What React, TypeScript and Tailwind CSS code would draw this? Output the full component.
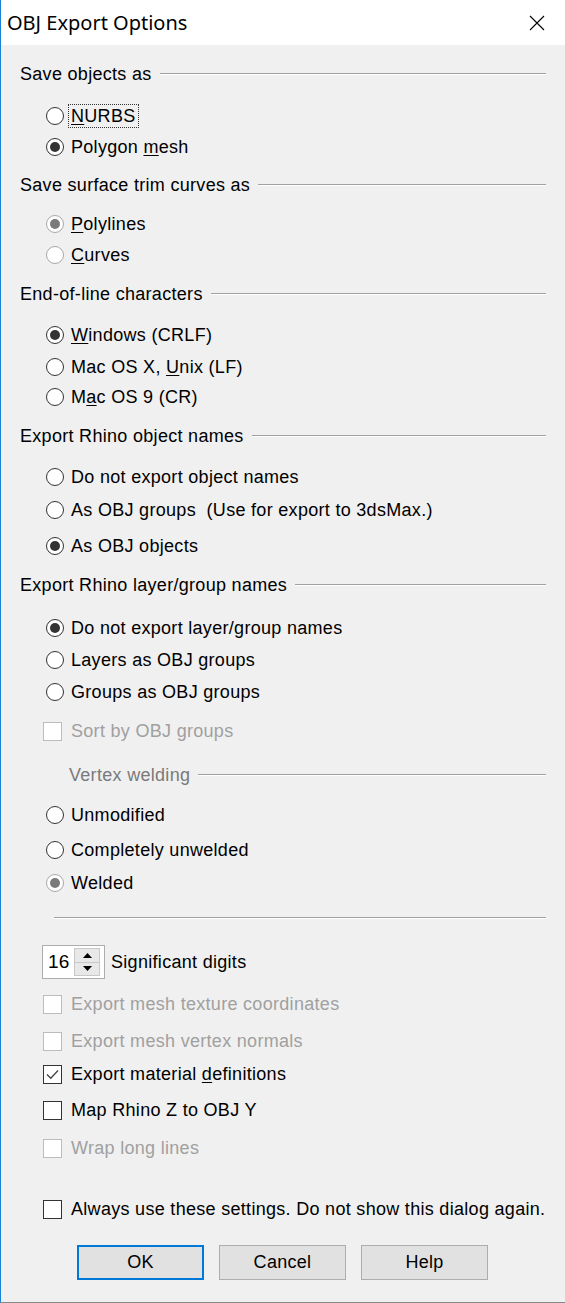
import React from 'react'

const font = { fontFamily: '"Liberation Sans", Arial, sans-serif' }

function Radio({ label, checked, disabled, className }: { label: React.ReactNode; checked?: boolean; disabled?: boolean; className: string }) {
  return (
    <div className={`flex h-[30px] items-center ${className}`}>
      <div
        className={`ml-[26px] flex h-[18px] w-[18px] shrink-0 items-center justify-center rounded-full border bg-white ${
          disabled ? 'border-[#a8a8a8]' : 'border-[#333333]'
        }`}
      >
        {checked && <div className={`h-[10px] w-[10px] rounded-full ${disabled ? 'bg-[#7a7a7a]' : 'bg-[#333333]'}`} />}
      </div>
      <span className="ml-[7px] whitespace-pre">{label}</span>
    </div>
  )
}

function Check({ label, checked, disabled, className }: { label: React.ReactNode; checked?: boolean; disabled?: boolean; className: string }) {
  return (
    <div className={`flex h-[30px] items-center ${className}`}>
      <div
        className={`ml-[23px] flex h-[19px] w-[19px] shrink-0 items-center justify-center border bg-white ${
          disabled ? 'border-[#bcbcbc]' : 'border-[#333333]'
        }`}
      >
        {checked && (
          <svg width="15" height="15" viewBox="0 0 15 15">
            <path d="M2 7.5 L5.8 11.3 L13 3.5" fill="none" stroke="#444" strokeWidth="1.3" />
          </svg>
        )}
      </div>
      <span className={`ml-[9px] whitespace-nowrap ${disabled ? 'text-[#a0a0a0]' : ''}`}>{label}</span>
    </div>
  )
}

function Header({ title, className, muted }: { title: string; className: string; muted?: boolean }) {
  return (
    <div className={`flex h-[30px] items-center ${className}`}>
      <span className={muted ? 'text-[#7a7a7a]' : ''}>{title}</span>
      <div className="ml-[8px] h-[2px] flex-1 border-t border-b border-t-[#a0a0a0] border-b-white" />
    </div>
  )
}

const U = ({ children }: { children: React.ReactNode }) => <u className="underline underline-offset-2">{children}</u>

export default function App() {
  return (
    <div
      className="flex min-h-[1303px] flex-col border-b border-l border-b-[#888888] border-l-[#1883d7] bg-[#f0f0f0] text-[18px] tracking-[0.3px] text-black"
      style={font}
    >
      <div className="flex h-[45px] items-center justify-between bg-white pl-[6px] pr-[20px]">
        <span className="text-[20px] tracking-normal" style={{ fontFamily: '"Noto Sans", "Open Sans", sans-serif' }}>
          OBJ Export Options
        </span>
        <svg width="16" height="16" viewBox="0 0 16 16">
          <path d="M1 1 L15 15 M15 1 L1 15" stroke="#000" strokeWidth="1.1" />
        </svg>
      </div>

      <div className="flex flex-1 flex-col pl-[19px] pr-[19px]">
        <Header title="Save objects as" className="mt-[14px]" />
        <Radio
          className="mt-[12px]"
          label={
            <span className="-ml-[3px] border border-dotted border-[#333] px-[2px] py-[1px]">
              <U>N</U>URBS
            </span>
          }
        />
        <Radio className="mt-[1px]" checked label={<>Polygon <U>m</U>esh</>} />

        <Header title="Save surface trim curves as" className="mt-[8px]" />
        <Radio className="mt-[9px]" checked disabled label={<><U>P</U>olylines</>} />
        <Radio className="mt-[1px]" disabled label={<><U>C</U>urves</>} />

        <Header title="End-of-line characters" className="mt-[9px]" />
        <Radio className="mt-[11px]" checked label={<><U>W</U>indows (CRLF)</>} />
        <Radio className="mt-[2px]" label={<>Mac OS X, <U>U</U>nix (LF)</>} />
        <Radio className="mt-[0px]" label={<>M<U>a</U>c OS 9 (CR)</>} />

        <Header title="Export Rhino object names" className="mt-[9px]" />
        <Radio className="mt-[11px]" label="Do not export object names" />
        <Radio className="mt-[3px]" label="As OBJ groups  (Use for export to 3dsMax.)" />
        <Radio className="mt-[6px]" checked label="As OBJ objects" />

        <Header title="Export Rhino layer/group names" className="mt-[9px]" />
        <Radio className="mt-[13px]" checked label="Do not export layer/group names" />
        <Radio className="mt-[2px]" label="Layers as OBJ groups" />
        <Radio className="mt-[2px]" label="Groups as OBJ groups" />
        <Check className="mt-[9px]" disabled label="Sort by OBJ groups" />

        <div className="ml-[49px]">
          <Header title="Vertex welding" className="mt-[14px]" muted />
        </div>
        <Radio className="mt-[10px]" label="Unmodified" />
        <Radio className="mt-[5px]" label="Completely unwelded" />
        <Radio className="mt-[3px]" checked disabled label="Welded" />

        <div className="mt-[5px] flex h-[30px] items-center pl-[34px]">
          <div className="h-[2px] flex-1 border-t border-b border-t-[#a0a0a0] border-b-white" />
        </div>

        <div className="mt-[14px] flex h-[30px] items-center">
          <div className="ml-[22px] flex h-[34px] w-[63px] items-center border border-[#adadad] bg-white">
            <span className="ml-[5px] w-[26px] text-[19px]">16</span>
            <div className="flex h-[28px] w-[26px] flex-col border border-[#c8c8c8] bg-[#e8e8e8]">
              <div className="flex flex-1 items-center justify-center border-b border-[#c8c8c8]">
                <svg width="9" height="5" viewBox="0 0 9 5">
                  <path d="M0 5 L4.5 0 L9 5 Z" fill="#000" />
                </svg>
              </div>
              <div className="flex flex-1 items-center justify-center">
                <svg width="9" height="5" viewBox="0 0 9 5">
                  <path d="M0 0 L4.5 5 L9 0 Z" fill="#000" />
                </svg>
              </div>
            </div>
          </div>
          <span className="ml-[6px]">Significant digits</span>
        </div>

        <Check className="mt-[12px]" disabled label="Export mesh texture coordinates" />
        <Check className="mt-[7px]" disabled label="Export mesh vertex normals" />
        <Check className="mt-[3px]" checked label={<>Export material <U>d</U>efinitions</>} />
        <Check className="mt-[6px]" label="Map Rhino Z to OBJ Y" />
        <Check className="mt-[8px]" disabled label="Wrap long lines" />

        <Check className="mt-[31px]" label="Always use these settings. Do not show this dialog again." />

        <div className="mt-[21px] flex h-[35px] gap-[15px] pl-[57px]">
          <button className="h-[35px] w-[127px] border-2 border-[#0078d7] bg-[#e1e1e1]">OK</button>
          <button className="h-[35px] w-[127px] border border-[#adadad] bg-[#e1e1e1]">Cancel</button>
          <button className="h-[35px] w-[127px] border border-[#adadad] bg-[#e1e1e1]">Help</button>
        </div>
      </div>
    </div>
  )
}
